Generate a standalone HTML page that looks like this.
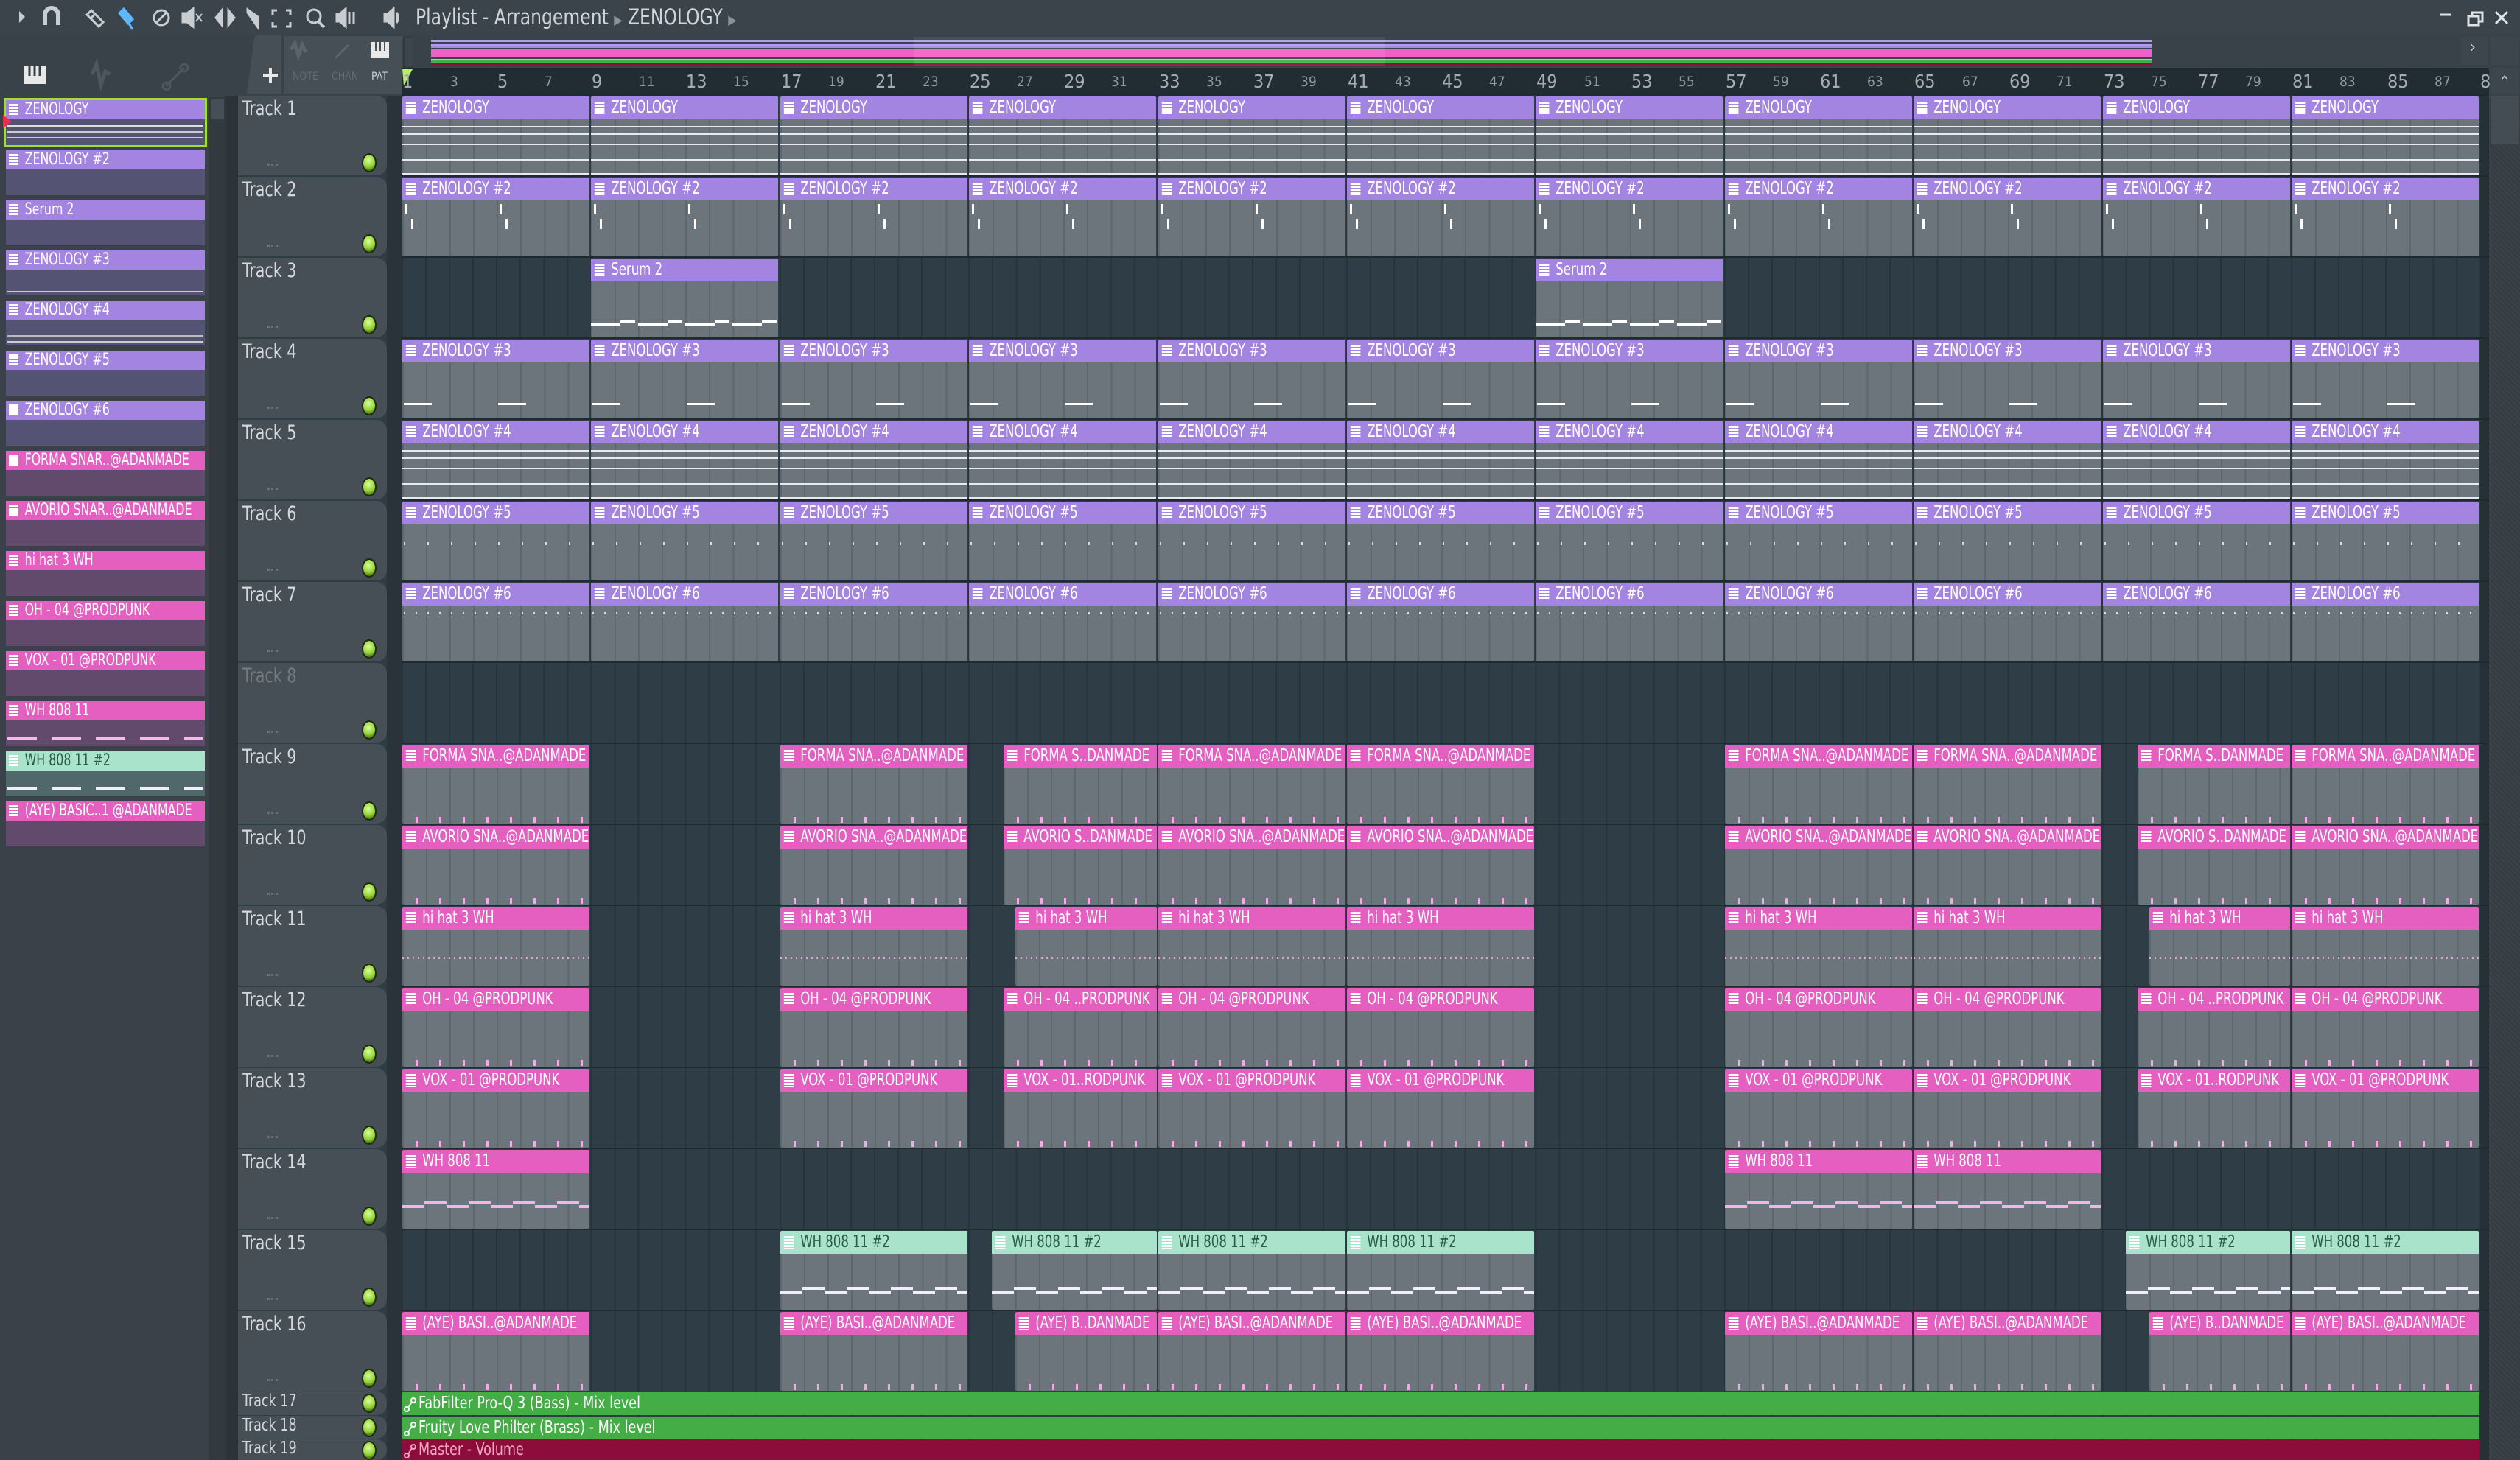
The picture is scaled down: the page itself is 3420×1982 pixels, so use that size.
<!DOCTYPE html>
<html><head><meta charset="utf-8"><style>
*{margin:0;padding:0;box-sizing:border-box}
body{width:3420px;height:1982px;overflow:hidden;background:#2f3d46;font-family:"DejaVu Sans Condensed","Liberation Sans Narrow","Liberation Sans",sans-serif;position:relative}
.a{position:absolute}
#title{left:0;top:0;width:3420px;height:47px;background:#3c444b}
#tb2{left:0;top:47px;width:3420px;height:83px;background:#3a4249}
#ov{left:585px;top:50px;width:2335px;height:40px;background:#34434d}
#ruler{left:545px;top:92px;width:2833px;height:38px;background:#222c33}
#browser{left:0;top:130px;width:320px;height:1852px;background:#3a4148}
#bscroll{left:283px;top:132px;width:24px;height:1850px;background:#323a40}
#grid{left:545px;top:130px;width:2833px;height:1852px;background:repeating-linear-gradient(90deg,#27343c 0 2px,#2f3d46 2px 32.05px)}
.rn{position:absolute;top:92px;font-size:19px;color:#8d979e;line-height:38px}
.rn.bg{font-size:25px;color:#a4adb3}
.th{position:absolute;left:323px;width:202px;height:108px;background:#464e56;border-radius:0 14px 14px 0}
.th span{position:absolute;left:6px;top:2px;font-size:27px;color:#d4d8db;transform:scaleX(.85);transform-origin:left}
.th i{position:absolute;left:168px;top:78px;width:20px;height:26px;border-radius:50%;background:radial-gradient(circle at 45% 35%,#d9ff9a,#8fd030 55%,#4d7a18 80%);border:2px solid #1f2a10}
.th em{position:absolute;left:40px;top:92px;width:14px;height:3px;border-top:3px dotted #6a7279}
.sep{position:absolute;left:525px;width:20px;background:#2a333a}
.c{position:absolute;height:107px;overflow:hidden;background:linear-gradient(var(--h),var(--h)) 0 0/100% 31px no-repeat,var(--n,linear-gradient(transparent,transparent)),repeating-linear-gradient(90deg,#5e676e 0 2px,#6c757c 2px 32.05px);border-radius:2px}
.c b{display:block;width:125%;transform:scaleX(.8);transform-origin:left;height:31px;line-height:31px;padding-left:34px;font-weight:normal;font-size:23px;color:#fff;white-space:nowrap;overflow:hidden;position:relative}
.c b::before{content:"";position:absolute;left:6px;top:7px;width:17px;height:17px;background:repeating-linear-gradient(#fff 0 3px,var(--h) 3px 4px);}
.p{--h:#a384e0}.k{--h:#e45fc0}.m{--h:#a9e3cb}.m b{color:#2a5a48}
.n1{--n:linear-gradient(#e9e9ee,#e9e9ee) 0 40px/100% 2px no-repeat,linear-gradient(#e9e9ee,#e9e9ee) 0 50px/100% 2px no-repeat,linear-gradient(#e9e9ee,#e9e9ee) 0 64px/100% 2px no-repeat,linear-gradient(#e9e9ee,#e9e9ee) 0 85px/100% 2px no-repeat,linear-gradient(#e9e9ee,#e9e9ee) 0 104px/100% 2px no-repeat}
.n2{--n:repeating-linear-gradient(90deg,#fff 0 3px,transparent 3px 128px) 4px 36px/100% 14px no-repeat,repeating-linear-gradient(90deg,#fff 0 3px,transparent 3px 128px) 12px 56px/100% 14px no-repeat}
.n3{--n:repeating-linear-gradient(90deg,#fff 0 40px,transparent 40px 64px) 0 88px/100% 3px no-repeat,repeating-linear-gradient(90deg,#fff 0 20px,transparent 20px 64px) 40px 84px/100% 3px no-repeat}
.n4{--n:repeating-linear-gradient(90deg,#fff 0 38px,transparent 38px 128px) 2px 86px/100% 3px no-repeat}
.n6{--n:repeating-linear-gradient(90deg,#ddd 0 2px,transparent 2px 32px) 2px 55px/100% 4px no-repeat}
.n7{--n:repeating-linear-gradient(90deg,#ddd 0 2px,transparent 2px 16px) 2px 40px/100% 3px no-repeat}
.nk{--n:repeating-linear-gradient(90deg,#f7a8e8 0 3px,transparent 3px 32px) 18px 98px/100% 8px no-repeat}
.nh{--n:repeating-linear-gradient(90deg,#d9a8d0 0 2px,transparent 2px 7px) 0 68px/100% 3px no-repeat}
.n14{--n:repeating-linear-gradient(90deg,#f5b4e6 0 30px,transparent 30px 60px) 0 75px/100% 4px no-repeat,repeating-linear-gradient(90deg,transparent 0 30px,#f5b4e6 30px 60px) 0 70px/100% 4px no-repeat}
.n15{--n:repeating-linear-gradient(90deg,#eef 0 30px,transparent 30px 60px) 0 82px/100% 4px no-repeat,repeating-linear-gradient(90deg,transparent 0 30px,#eef 30px 60px) 0 76px/100% 4px no-repeat}
.r1{top:131px}.r2{top:241px}.r3{top:351px}.r4{top:461px}.r5{top:571px}.r6{top:681px}.r7{top:791px}
.r9{top:1011px}.r10{top:1121px}.r11{top:1231px}.r12{top:1341px}.r13{top:1451px}.r14{top:1561px}.r15{top:1671px}.r16{top:1781px}
.x0{left:546px;width:254px}.x1{left:802px;width:254px}.x2{left:1059px;width:254px}.x3{left:1315px;width:254px}.x4{left:1572px;width:254px}.x5{left:1828px;width:254px}.x6{left:2084px;width:254px}.x7{left:2341px;width:254px}.x8{left:2597px;width:254px}.x9{left:2854px;width:254px}.x10{left:3110px;width:254px}
.s25{left:1362px;width:208px}.s26{left:1378px;width:192px}.s24{left:1346px;width:224px}.s73{left:2901px;width:207px}.s74{left:2917px;width:191px}.s72{left:2885px;width:223px}
.pi{position:absolute;left:8px;width:270px;height:61px;overflow:hidden}
.pi b{display:block;width:125%;transform:scaleX(.8);transform-origin:left;height:26px;line-height:26px;padding-left:32px;font-weight:normal;font-size:22px;color:#fff;white-space:nowrap;overflow:hidden;position:relative;background:var(--h)}
.pi b::before{content:"";position:absolute;left:5px;top:5px;width:16px;height:16px;background:repeating-linear-gradient(#fff 0 3px,var(--h) 3px 4px)}
.pi.p{background:#545374}.pi.k{background:#624a6c}.pi.m{background:#50686a}
.auto{position:absolute;left:546px;width:2819px;color:#fff;font-size:20px;padding-left:22px;line-height:30px;white-space:nowrap}
</style></head><body>
<div id="title" class="a"></div>
<div id="tb2" class="a"></div>
<svg class="a" style="left:0;top:0" width="560" height="47" fill="none" stroke="#c8cdd1" stroke-width="3">
<path d="M26 15 L34 23 L26 31Z" fill="#c8cdd1" stroke="none"/>
<path d="M61 34 V20 a9 9 0 0 1 18 0 V34" stroke-width="6"/>
<path d="M124 14 l16 16 -6 6 -16 -16z M128 20 l-6 6"/>
<path d="M168 12 l12 14 -6 6 -12 -14z" stroke="#5fb8ff" fill="#5fb8ff"/><path d="M174 30 l6 10" stroke="#5fb8ff"/>
<circle cx="219" cy="24" r="10"/><path d="M212 31 l14 -14"/>
<path d="M248 18 h6 l8 -6 v24 l-8 -6 h-6z" fill="#c8cdd1"/><path d="M266 19 l8 10 M274 19 l-8 10" stroke-width="2"/>
<path d="M293 24 l8 -10 v20z M318 24 l-8 -10 v20z" fill="#c8cdd1"/>
<path d="M336 13 l14 10 v14 l-14 -20z" fill="#c8cdd1"/>
<path d="M376 14 h-6 v6 M388 14 h6 v6 M376 36 h-6 v-6 M388 36 h6 v-6"/>
<circle cx="426" cy="22" r="9"/><path d="M432 29 l8 8" stroke-width="4"/>
<path d="M457 19 h4 l8 -7 v24 l-8 -7 h-4z M474 16 v16 M480 16 v16" fill="#c8cdd1"/>
<path d="M522 19 h4 l8 -7 v24 l-8 -7 h-4z M538 17 q5 7 0 14" fill="#c8cdd1"/>
</svg>
<div class="a" style="left:564px;top:4px;font-size:29px;color:#d0d5d9;line-height:38px;transform:scaleX(.9);transform-origin:left;white-space:nowrap">Playlist - Arrangement <span style="font-size:18px;color:#8a9399">▶</span> ZENOLOGY <span style="font-size:18px;color:#8a9399">▶</span></div>
<svg class="a" style="left:3300px;top:0" width="120" height="47" fill="none" stroke="#e0e3e5" stroke-width="3">
<path d="M12 20 h14"/><rect x="50" y="22" width="14" height="12"/><path d="M55 22 v-5 h14 v12 h-5"/><path d="M87 16 l16 16 M103 16 l-16 16"/>
</svg>
<svg class="a" style="left:0;top:47px" width="560" height="83" fill="none">
<rect x="32" y="42" width="30" height="25" fill="#e8e8e8"/><path d="M40 42 v14 M47 42 v14 M54 42 v14" stroke="#3a4249" stroke-width="3"/>
<path d="M125 54 l6 -14 6 28 6 -18 6 4" stroke="#4f575e" stroke-width="5"/>
<path d="M225 70 l25 -25" stroke="#4f575e" stroke-width="3"/><circle cx="226" cy="70" r="5" stroke="#4f575e" stroke-width="3"/><circle cx="250" cy="45" r="5" stroke="#4f575e" stroke-width="3"/>
<path d="M335 80 L345 5 Q348 0 356 0 H382 V80Z" fill="#464e56"/>
<path d="M357 55 h20 M367 45 v20" stroke="#e8e8e8" stroke-width="4"/>
<rect x="385" y="2" width="160" height="78" fill="#464e56"/>
<path d="M395 20 l5 -8 5 16 5 -14 5 10" stroke="#5c646a" stroke-width="5"/>
<path d="M455 32 l18 -18" stroke="#5c646a" stroke-width="3"/>
<rect x="503" y="10" width="25" height="22" fill="#e8e8e8"/><path d="M510 10 v12 M516 10 v12 M522 10 v12" stroke="#464e56" stroke-width="2"/>
<rect x="548" y="4" width="36" height="40" fill="#3d464d" stroke="#2a3238"/><path d="M569 14 l-6 10 6 10" stroke="#c8cdd1" stroke-width="2"/>
</svg>
<div class="a" style="left:397px;top:96px;font-size:14px;color:#646c72">NOTE</div>
<div class="a" style="left:450px;top:96px;font-size:14px;color:#646c72">CHAN</div>
<div class="a" style="left:504px;top:96px;font-size:14px;color:#cfd3d6">PAT</div>
<div id="ov" class="a" style="background:linear-gradient(#34434d 0 4px,#b59af0 4px 7px,#34434d 7px 10px,#b59af0 10px 12px,#a38be0 12px 15px,#34434d 15px 17px,#f060c8 17px 27px,#34434d 27px 30px,#9ad6b8 30px 32px,#42b048 32px 35px,#8e0e3a 35px 38px,#34434d 38px)"></div>
<div class="a" style="left:1240px;top:50px;width:640px;height:40px;background:rgba(255,255,255,.08)"></div>
<div class="a" style="left:3340px;top:50px;width:36px;height:38px;background:#3d464d"></div>
<div class="a" style="left:3352px;top:52px;color:#c8cdd1;font-size:22px">›</div>
<div class="a" style="left:3380px;top:50px;width:38px;height:38px;background:#3d464d"></div>
<div id="ruler" class="a"></div>
<svg class="a" style="left:545px;top:92px" width="18" height="28"><path d="M1 2 h14 l-12 22z" fill="#b6f05a"/></svg>
<div class="rn bg" style="left:546px">1</div><div class="rn" style="left:611px">3</div><div class="rn bg" style="left:675px">5</div><div class="rn" style="left:739px">7</div><div class="rn bg" style="left:803px">9</div><div class="rn" style="left:867px">11</div><div class="rn bg" style="left:931px">13</div><div class="rn" style="left:995px">15</div><div class="rn bg" style="left:1060px">17</div><div class="rn" style="left:1124px">19</div><div class="rn bg" style="left:1188px">21</div><div class="rn" style="left:1252px">23</div><div class="rn bg" style="left:1316px">25</div><div class="rn" style="left:1380px">27</div><div class="rn bg" style="left:1444px">29</div><div class="rn" style="left:1508px">31</div><div class="rn bg" style="left:1573px">33</div><div class="rn" style="left:1637px">35</div><div class="rn bg" style="left:1701px">37</div><div class="rn" style="left:1765px">39</div><div class="rn bg" style="left:1829px">41</div><div class="rn" style="left:1893px">43</div><div class="rn bg" style="left:1957px">45</div><div class="rn" style="left:2021px">47</div><div class="rn bg" style="left:2085px">49</div><div class="rn" style="left:2150px">51</div><div class="rn bg" style="left:2214px">53</div><div class="rn" style="left:2278px">55</div><div class="rn bg" style="left:2342px">57</div><div class="rn" style="left:2406px">59</div><div class="rn bg" style="left:2470px">61</div><div class="rn" style="left:2534px">63</div><div class="rn bg" style="left:2598px">65</div><div class="rn" style="left:2663px">67</div><div class="rn bg" style="left:2727px">69</div><div class="rn" style="left:2791px">71</div><div class="rn bg" style="left:2855px">73</div><div class="rn" style="left:2919px">75</div><div class="rn bg" style="left:2983px">77</div><div class="rn" style="left:3047px">79</div><div class="rn bg" style="left:3111px">81</div><div class="rn" style="left:3175px">83</div><div class="rn bg" style="left:3240px">85</div><div class="rn" style="left:3304px">87</div><div class="rn bg" style="left:3366px">8</div>
<div id="browser" class="a"></div>
<div id="bscroll" class="a"></div>
<div class="a" style="left:286px;top:134px;width:18px;height:28px;background:#464e56"></div>
<div class="a" style="left:307px;top:130px;width:16px;height:1852px;background:#2c343a"></div>
<div class="pi p" style="top:136px;outline:3px solid #9fe02c"><b>ZENOLOGY</b></div>
<div class="pi p" style="top:204px"><b>ZENOLOGY #2</b></div>
<div class="pi p" style="top:272px"><b>Serum 2</b></div>
<div class="pi p" style="top:340px"><b>ZENOLOGY #3</b></div>
<div class="pi p" style="top:408px"><b>ZENOLOGY #4</b></div>
<div class="pi p" style="top:476px"><b>ZENOLOGY #5</b></div>
<div class="pi p" style="top:544px"><b>ZENOLOGY #6</b></div>
<div class="pi k" style="top:612px"><b>FORMA SNAR..@ADANMADE</b></div>
<div class="pi k" style="top:680px"><b>AVORIO SNAR..@ADANMADE</b></div>
<div class="pi k" style="top:748px"><b>hi hat 3 WH</b></div>
<div class="pi k" style="top:816px"><b>OH - 04 @PRODPUNK</b></div>
<div class="pi k" style="top:884px"><b>VOX - 01 @PRODPUNK</b></div>
<div class="pi k" style="top:952px"><b>WH 808 11</b></div>
<div class="pi m" style="top:1020px"><b style="color:#2a5a48">WH 808 11 #2</b></div>
<div class="pi k" style="top:1088px"><b>(AYE) BASIC..1 @ADANMADE</b></div>
<div class="a" style="left:10px;top:170px;width:266px;height:2px;background:#ddd"></div><div class="a" style="left:10px;top:178px;width:266px;height:2px;background:#ccc"></div><div class="a" style="left:10px;top:186px;width:266px;height:2px;background:#ccc"></div>
<div class="a" style="left:10px;top:395px;width:266px;height:2px;background:#ccc"></div><div class="a" style="left:10px;top:463px;width:266px;height:2px;background:#ccc"></div><div class="a" style="left:10px;top:455px;width:266px;height:2px;background:#bbb"></div>
<div class="a" style="left:10px;top:1000px;width:266px;height:4px;background:repeating-linear-gradient(90deg,#fbb6ea 0 40px,transparent 40px 60px)"></div>
<div class="a" style="left:10px;top:1068px;width:266px;height:4px;background:repeating-linear-gradient(90deg,#eef 0 40px,transparent 40px 60px)"></div>
<div class="a" style="left:4px;top:156px;width:0;height:0;border:9px solid transparent;border-left:12px solid #e83050"></div>
<div id="grid" class="a"></div>
<div class="a" style="left:3378px;top:130px;width:42px;height:1852px;background:repeating-linear-gradient(45deg,#343c42 0 2px,#3a4248 2px 5px)"></div>
<div class="a" style="left:3380px;top:92px;width:38px;height:36px;background:#3d464d;color:#c8cdd1;font-size:20px;text-align:center;line-height:36px">⌃</div>
<div class="a" style="left:3380px;top:130px;width:38px;height:66px;background:#454d54"></div>
<div class="a" style="left:3366px;top:130px;width:12px;height:1852px;background:#263037"></div>
<div class="sep" style="top:130px;height:1852px"></div>
<div class="th" style="top:130px"><span>Track 1</span><i></i><em></em></div>
<div class="th" style="top:240px"><span>Track 2</span><i></i><em></em></div>
<div class="th" style="top:350px"><span>Track 3</span><i></i><em></em></div>
<div class="th" style="top:460px"><span>Track 4</span><i></i><em></em></div>
<div class="th" style="top:570px"><span>Track 5</span><i></i><em></em></div>
<div class="th" style="top:680px"><span>Track 6</span><i></i><em></em></div>
<div class="th" style="top:790px"><span>Track 7</span><i></i><em></em></div>
<div class="th" style="top:900px"><span style="color:#737b81">Track 8</span><i></i><em></em></div>
<div class="th" style="top:1010px"><span>Track 9</span><i></i><em></em></div>
<div class="th" style="top:1120px"><span>Track 10</span><i></i><em></em></div>
<div class="th" style="top:1230px"><span>Track 11</span><i></i><em></em></div>
<div class="th" style="top:1340px"><span>Track 12</span><i></i><em></em></div>
<div class="th" style="top:1450px"><span>Track 13</span><i></i><em></em></div>
<div class="th" style="top:1560px"><span>Track 14</span><i></i><em></em></div>
<div class="th" style="top:1670px"><span>Track 15</span><i></i><em></em></div>
<div class="th" style="top:1780px"><span>Track 16</span><i></i><em></em></div>
<div class="th" style="top:1889px;height:32px"><span style="top:0;font-size:23px">Track 17</span><i style="top:3px"></i></div>
<div class="th" style="top:1922px;height:31px"><span style="top:0;font-size:23px">Track 18</span><i style="top:3px"></i></div>
<div class="th" style="top:1954px;height:28px"><span style="top:-1px;font-size:23px">Track 19</span><i style="top:2px"></i></div>
<div class="a" style="left:545px;top:128px;width:2833px;height:1760px;background:repeating-linear-gradient(#1f2a30 0 2px,transparent 2px 110px)"></div>
<div class="c p n1 r1 x0"><b>ZENOLOGY</b></div><div class="c p n1 r1 x1"><b>ZENOLOGY</b></div><div class="c p n1 r1 x2"><b>ZENOLOGY</b></div><div class="c p n1 r1 x3"><b>ZENOLOGY</b></div><div class="c p n1 r1 x4"><b>ZENOLOGY</b></div><div class="c p n1 r1 x5"><b>ZENOLOGY</b></div><div class="c p n1 r1 x6"><b>ZENOLOGY</b></div><div class="c p n1 r1 x7"><b>ZENOLOGY</b></div><div class="c p n1 r1 x8"><b>ZENOLOGY</b></div><div class="c p n1 r1 x9"><b>ZENOLOGY</b></div><div class="c p n1 r1 x10"><b>ZENOLOGY</b></div>
<div class="c p n2 r2 x0"><b>ZENOLOGY #2</b></div><div class="c p n2 r2 x1"><b>ZENOLOGY #2</b></div><div class="c p n2 r2 x2"><b>ZENOLOGY #2</b></div><div class="c p n2 r2 x3"><b>ZENOLOGY #2</b></div><div class="c p n2 r2 x4"><b>ZENOLOGY #2</b></div><div class="c p n2 r2 x5"><b>ZENOLOGY #2</b></div><div class="c p n2 r2 x6"><b>ZENOLOGY #2</b></div><div class="c p n2 r2 x7"><b>ZENOLOGY #2</b></div><div class="c p n2 r2 x8"><b>ZENOLOGY #2</b></div><div class="c p n2 r2 x9"><b>ZENOLOGY #2</b></div><div class="c p n2 r2 x10"><b>ZENOLOGY #2</b></div>
<div class="c p n3 r3 x1"><b>Serum 2</b></div><div class="c p n3 r3 x6"><b>Serum 2</b></div>
<div class="c p n4 r4 x0"><b>ZENOLOGY #3</b></div><div class="c p n4 r4 x1"><b>ZENOLOGY #3</b></div><div class="c p n4 r4 x2"><b>ZENOLOGY #3</b></div><div class="c p n4 r4 x3"><b>ZENOLOGY #3</b></div><div class="c p n4 r4 x4"><b>ZENOLOGY #3</b></div><div class="c p n4 r4 x5"><b>ZENOLOGY #3</b></div><div class="c p n4 r4 x6"><b>ZENOLOGY #3</b></div><div class="c p n4 r4 x7"><b>ZENOLOGY #3</b></div><div class="c p n4 r4 x8"><b>ZENOLOGY #3</b></div><div class="c p n4 r4 x9"><b>ZENOLOGY #3</b></div><div class="c p n4 r4 x10"><b>ZENOLOGY #3</b></div>
<div class="c p n1 r5 x0"><b>ZENOLOGY #4</b></div><div class="c p n1 r5 x1"><b>ZENOLOGY #4</b></div><div class="c p n1 r5 x2"><b>ZENOLOGY #4</b></div><div class="c p n1 r5 x3"><b>ZENOLOGY #4</b></div><div class="c p n1 r5 x4"><b>ZENOLOGY #4</b></div><div class="c p n1 r5 x5"><b>ZENOLOGY #4</b></div><div class="c p n1 r5 x6"><b>ZENOLOGY #4</b></div><div class="c p n1 r5 x7"><b>ZENOLOGY #4</b></div><div class="c p n1 r5 x8"><b>ZENOLOGY #4</b></div><div class="c p n1 r5 x9"><b>ZENOLOGY #4</b></div><div class="c p n1 r5 x10"><b>ZENOLOGY #4</b></div>
<div class="c p n6 r6 x0"><b>ZENOLOGY #5</b></div><div class="c p n6 r6 x1"><b>ZENOLOGY #5</b></div><div class="c p n6 r6 x2"><b>ZENOLOGY #5</b></div><div class="c p n6 r6 x3"><b>ZENOLOGY #5</b></div><div class="c p n6 r6 x4"><b>ZENOLOGY #5</b></div><div class="c p n6 r6 x5"><b>ZENOLOGY #5</b></div><div class="c p n6 r6 x6"><b>ZENOLOGY #5</b></div><div class="c p n6 r6 x7"><b>ZENOLOGY #5</b></div><div class="c p n6 r6 x8"><b>ZENOLOGY #5</b></div><div class="c p n6 r6 x9"><b>ZENOLOGY #5</b></div><div class="c p n6 r6 x10"><b>ZENOLOGY #5</b></div>
<div class="c p n7 r7 x0"><b>ZENOLOGY #6</b></div><div class="c p n7 r7 x1"><b>ZENOLOGY #6</b></div><div class="c p n7 r7 x2"><b>ZENOLOGY #6</b></div><div class="c p n7 r7 x3"><b>ZENOLOGY #6</b></div><div class="c p n7 r7 x4"><b>ZENOLOGY #6</b></div><div class="c p n7 r7 x5"><b>ZENOLOGY #6</b></div><div class="c p n7 r7 x6"><b>ZENOLOGY #6</b></div><div class="c p n7 r7 x7"><b>ZENOLOGY #6</b></div><div class="c p n7 r7 x8"><b>ZENOLOGY #6</b></div><div class="c p n7 r7 x9"><b>ZENOLOGY #6</b></div><div class="c p n7 r7 x10"><b>ZENOLOGY #6</b></div>
<div class="c k nk r9 x0"><b>FORMA SNA..@ADANMADE</b></div><div class="c k nk r9 x2"><b>FORMA SNA..@ADANMADE</b></div><div class="c k nk r9 s25"><b>FORMA S..DANMADE</b></div><div class="c k nk r9 x4"><b>FORMA SNA..@ADANMADE</b></div><div class="c k nk r9 x5"><b>FORMA SNA..@ADANMADE</b></div><div class="c k nk r9 x7"><b>FORMA SNA..@ADANMADE</b></div><div class="c k nk r9 x8"><b>FORMA SNA..@ADANMADE</b></div><div class="c k nk r9 s73"><b>FORMA S..DANMADE</b></div><div class="c k nk r9 x10"><b>FORMA SNA..@ADANMADE</b></div>
<div class="c k nk r10 x0"><b>AVORIO SNA..@ADANMADE</b></div><div class="c k nk r10 x2"><b>AVORIO SNA..@ADANMADE</b></div><div class="c k nk r10 s25"><b>AVORIO S..DANMADE</b></div><div class="c k nk r10 x4"><b>AVORIO SNA..@ADANMADE</b></div><div class="c k nk r10 x5"><b>AVORIO SNA..@ADANMADE</b></div><div class="c k nk r10 x7"><b>AVORIO SNA..@ADANMADE</b></div><div class="c k nk r10 x8"><b>AVORIO SNA..@ADANMADE</b></div><div class="c k nk r10 s73"><b>AVORIO S..DANMADE</b></div><div class="c k nk r10 x10"><b>AVORIO SNA..@ADANMADE</b></div>
<div class="c k nh r11 x0"><b>hi hat 3 WH</b></div><div class="c k nh r11 x2"><b>hi hat 3 WH</b></div><div class="c k nh r11 s26"><b>hi hat 3 WH</b></div><div class="c k nh r11 x4"><b>hi hat 3 WH</b></div><div class="c k nh r11 x5"><b>hi hat 3 WH</b></div><div class="c k nh r11 x7"><b>hi hat 3 WH</b></div><div class="c k nh r11 x8"><b>hi hat 3 WH</b></div><div class="c k nh r11 s74"><b>hi hat 3 WH</b></div><div class="c k nh r11 x10"><b>hi hat 3 WH</b></div>
<div class="c k nk r12 x0"><b>OH - 04 @PRODPUNK</b></div><div class="c k nk r12 x2"><b>OH - 04 @PRODPUNK</b></div><div class="c k nk r12 s25"><b>OH - 04 ..PRODPUNK</b></div><div class="c k nk r12 x4"><b>OH - 04 @PRODPUNK</b></div><div class="c k nk r12 x5"><b>OH - 04 @PRODPUNK</b></div><div class="c k nk r12 x7"><b>OH - 04 @PRODPUNK</b></div><div class="c k nk r12 x8"><b>OH - 04 @PRODPUNK</b></div><div class="c k nk r12 s73"><b>OH - 04 ..PRODPUNK</b></div><div class="c k nk r12 x10"><b>OH - 04 @PRODPUNK</b></div>
<div class="c k nk r13 x0"><b>VOX - 01 @PRODPUNK</b></div><div class="c k nk r13 x2"><b>VOX - 01 @PRODPUNK</b></div><div class="c k nk r13 s25"><b>VOX - 01..RODPUNK</b></div><div class="c k nk r13 x4"><b>VOX - 01 @PRODPUNK</b></div><div class="c k nk r13 x5"><b>VOX - 01 @PRODPUNK</b></div><div class="c k nk r13 x7"><b>VOX - 01 @PRODPUNK</b></div><div class="c k nk r13 x8"><b>VOX - 01 @PRODPUNK</b></div><div class="c k nk r13 s73"><b>VOX - 01..RODPUNK</b></div><div class="c k nk r13 x10"><b>VOX - 01 @PRODPUNK</b></div>
<div class="c k n14 r14 x0"><b>WH 808 11</b></div><div class="c k n14 r14 x7"><b>WH 808 11</b></div><div class="c k n14 r14 x8"><b>WH 808 11</b></div>
<div class="c m n15 r15 x2"><b>WH 808 11 #2</b></div><div class="c m n15 r15 s24"><b>WH 808 11 #2</b></div><div class="c m n15 r15 x4"><b>WH 808 11 #2</b></div><div class="c m n15 r15 x5"><b>WH 808 11 #2</b></div><div class="c m n15 r15 s72"><b>WH 808 11 #2</b></div><div class="c m n15 r15 x10"><b>WH 808 11 #2</b></div>
<div class="c k nk r16 x0"><b>(AYE) BASI..@ADANMADE</b></div><div class="c k nk r16 x2"><b>(AYE) BASI..@ADANMADE</b></div><div class="c k nk r16 s26"><b>(AYE) B..DANMADE</b></div><div class="c k nk r16 x4"><b>(AYE) BASI..@ADANMADE</b></div><div class="c k nk r16 x5"><b>(AYE) BASI..@ADANMADE</b></div><div class="c k nk r16 x7"><b>(AYE) BASI..@ADANMADE</b></div><div class="c k nk r16 x8"><b>(AYE) BASI..@ADANMADE</b></div><div class="c k nk r16 s74"><b>(AYE) B..DANMADE</b></div><div class="c k nk r16 x10"><b>(AYE) BASI..@ADANMADE</b></div>
<div class="auto" style="top:1890px;height:31px;background:#44ad46"><span style="display:inline-block;font-size:23px;transform:scaleX(.85);transform-origin:left">FabFilter Pro-Q 3 (Bass) - Mix level</span></div>
<div class="auto" style="top:1923px;height:30px;background:#44ad46"><span style="display:inline-block;font-size:23px;transform:scaleX(.85);transform-origin:left">Fruity Love Philter (Brass) - Mix level</span></div>
<div class="auto" style="top:1955px;height:27px;background:#8c0d3b;color:#f2a8c4;line-height:27px"><span style="display:inline-block;font-size:23px;transform:scaleX(.85);transform-origin:left">Master - Volume</span></div>
<svg class="a" style="left:548px;top:1895px" width="18" height="84" fill="none" stroke="#fff" stroke-width="2"><circle cx="4" cy="18" r="3"/><circle cx="13" cy="6" r="3"/><path d="M6 16 l5 -8"/><circle cx="4" cy="51" r="3"/><circle cx="13" cy="39" r="3"/><path d="M6 49 l5 -8"/><g stroke="#f2a8c4"><circle cx="4" cy="81" r="3"/><circle cx="13" cy="69" r="3"/><path d="M6 79 l5 -8"/></g></svg>
</body></html>
